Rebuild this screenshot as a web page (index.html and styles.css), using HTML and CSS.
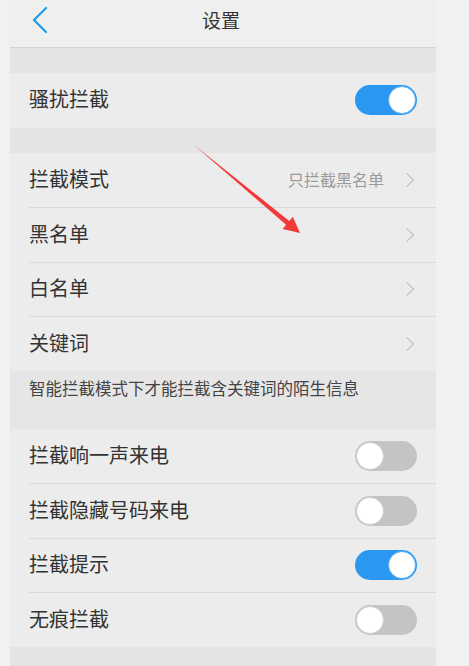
FILE: index.html
```html
<!DOCTYPE html>
<html lang="zh-CN">
<head>
    <meta charset="UTF-8">
    <meta name="viewport" content="width=device-width, initial-scale=1.0">
    <title>设置</title>
    <link rel="stylesheet" href="styles.css">
</head>
<body>
    <div class="phone">
        <div class="header">
            <svg class="back" width="20" height="30" viewBox="0 0 20 30">
                <polyline points="15,3 3,15 15,27" fill="none" stroke="#1e9bea" stroke-width="2.2" stroke-linecap="round" stroke-linejoin="round"/>
            </svg>
            <span class="title">设置</span>
        </div>

        <div class="gap"></div>
        <div class="group">
            <div class="row">
                <span class="label">骚扰拦截</span>
                <span class="switch on"></span>
            </div>
        </div>

        <div class="gap"></div>
        <div class="group">
            <div class="row">
                <span class="label">拦截模式</span>
                <span class="value">只拦截黑名单</span>
                <span class="chevron"></span>
            </div>
            <div class="row">
                <span class="label">黑名单</span>
                <span class="chevron"></span>
            </div>
            <div class="row">
                <span class="label">白名单</span>
                <span class="chevron"></span>
            </div>
            <div class="row">
                <span class="label">关键词</span>
                <span class="chevron"></span>
            </div>
        </div>

        <div class="note">智能拦截模式下才能拦截含关键词的陌生信息</div>

        <div class="group">
            <div class="row">
                <span class="label">拦截响一声来电</span>
                <span class="switch"></span>
            </div>
            <div class="row">
                <span class="label">拦截隐藏号码来电</span>
                <span class="switch"></span>
            </div>
            <div class="row">
                <span class="label">拦截提示</span>
                <span class="switch on"></span>
            </div>
            <div class="row">
                <span class="label">无痕拦截</span>
                <span class="switch"></span>
            </div>
        </div>
        <div class="footer"></div>
    </div>

    <!-- red annotation arrow drawn over the screenshot -->
    <svg class="arrow" width="469" height="666" viewBox="0 0 469 666">
        <polygon points="194,145 289.3,220.9 292.8,216.7 300,233 282.6,229 286.1,224.7" fill="#f23a3a"/>
    </svg>
</body>
</html>
```

FILE: styles.css
```css
html, body {
    margin: 0;
    padding: 0;
}
body {
    font-family: "Noto Sans CJK SC", "Noto Sans", sans-serif;
    background-color: #f1f1f1;
    color: #333;
    width: 469px;
    height: 666px;
    overflow: hidden;
    position: relative;
}
.phone {
    width: 426px;
    margin-left: 10px;
    height: 666px;
    background-color: #ececec;
    display: flex;
    flex-direction: column;
}
.header {
    height: 47px;
    background-color: #efefef;
    border-bottom: 1px solid #d3d3d3;
    display: flex;
    align-items: center;
    justify-content: center;
    position: relative;
}
.back {
    position: absolute;
    left: 21px;
    top: 5px;
}
.title {
    font-size: 19px;
    color: #333;
    margin-left: -4px;
    margin-top: -8px;
}
.gap {
    height: 25px;
    background-color: #e4e4e4;
}
.group {
    background-color: #ececec;
}
.row {
    height: 54.5px;
    box-sizing: border-box;
    margin-left: 19px;
    padding-right: 19px;
    display: flex;
    align-items: center;
}
.row + .row {
    border-top: 1px solid #d9d9d9;
}
.label {
    font-size: 20px;
    color: #333;
    flex: 1;
    margin-top: -3px;
}
.value {
    font-size: 16px;
    color: #9a9a9a;
    margin-right: 18px;
    margin-top: -2px;
}
.chevron {
    width: 9px;
    height: 9px;
    border-top: 1.5px solid #bcbcbc;
    border-right: 1.5px solid #bcbcbc;
    transform: rotate(45deg);
    margin-right: 5px;
}
.note {
    height: 58px;
    box-sizing: border-box;
    background-color: #e6e6e6;
    padding: 5px 0 0 19px;
    font-size: 16.5px;
    color: #444;
}
.switch {
    width: 62px;
    height: 30px;
    border-radius: 15px;
    background-color: #c4c4c4;
    position: relative;
    flex-shrink: 0;
}
.switch::after {
    content: "";
    position: absolute;
    top: 1px;
    left: 1px;
    width: 26px;
    height: 26px;
    border-radius: 50%;
    background-color: #fff;
    border: 1px solid #d0d0d0;
}
.switch.on {
    background-color: #2a98f1;
}
.switch.on::after {
    left: auto;
    right: 1px;
    border-color: #5aaff3;
}
.footer {
    flex: 1;
    background-color: #e4e4e4;
}
.arrow {
    position: absolute;
    left: 0;
    top: 0;
    pointer-events: none;
}
```
